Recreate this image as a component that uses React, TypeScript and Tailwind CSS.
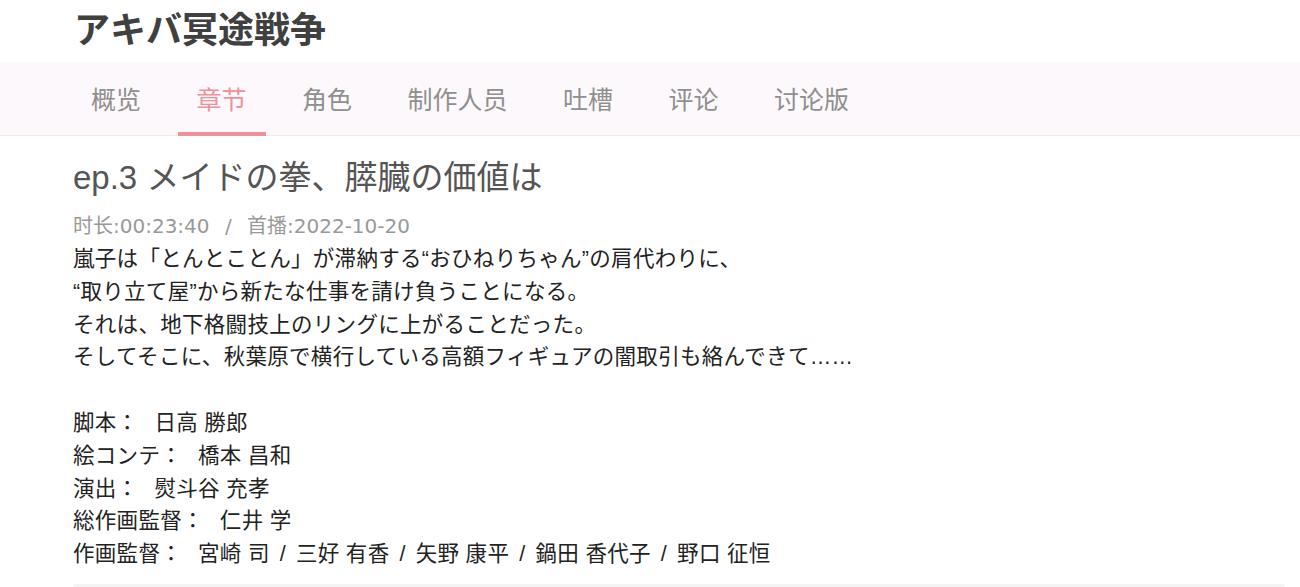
import React from "react";

const TABS = ["概览", "章节", "角色", "制作人员", "吐槽", "评论", "讨论版"];

const DESC = [
  "嵐子は「とんとことん」が滞納する“おひねりちゃん”の肩代わりに、",
  "“取り立て屋”から新たな仕事を請け負うことになる。",
  "それは、地下格闘技上のリングに上がることだった。",
  "そしてそこに、秋葉原で横行している高額フィギュアの闇取引も絡んできて……",
];

const STAFF = [
  { role: "脚本", names: ["日高 勝郎"] },
  { role: "絵コンテ", names: ["橋本 昌和"] },
  { role: "演出", names: ["熨斗谷 充孝"] },
  { role: "総作画監督", names: ["仁井 学"] },
  {
    role: "作画監督",
    names: ["宮崎 司", "三好 有香", "矢野 康平", "鍋田 香代子", "野口 征恒"],
  },
];

const jpFont = "font-['Liberation_Sans','Noto_Sans_CJK_JP',sans-serif]";

export default function App() {
  return (
    <div className="min-h-[587px] bg-white">
      {/* title */}
      <header className="flex h-[62px] items-center pl-[74px]">
        <h1
          className={`text-[36px] font-bold leading-none text-[#404040] ${jpFont}`}
        >
          アキバ冥途戦争
        </h1>
      </header>

      {/* tabs */}
      <nav className="flex h-[74px] gap-[17.5px] border-b border-[#ececec] bg-[#fdf8fb] pl-[72px]">
        {TABS.map((tab) => {
          const active = tab === "章节";
          return (
            <div
              key={tab}
              className={`-mb-px flex items-center border-b-4 px-[19px] pt-[3px] font-['Noto_Sans_CJK_SC',sans-serif] text-[25px] ${
                active
                  ? "border-[#f09199] text-[#f09199]"
                  : "border-transparent text-[#8f8f8f]"
              }`}
            >
              {tab}
            </div>
          );
        })}
      </nav>

      {/* episode */}
      <section className={`pl-[73px] pr-[15px] pt-[22px] ${jpFont}`}>
        <h2 className="text-[33px] leading-[40px] text-[#555]">
          ep.3 メイドの拳、膵臓の価値は
        </h2>
        <div className="mt-[12px] font-['DejaVu_Sans','Noto_Sans_CJK_SC',sans-serif] text-[20px] leading-[33px] text-[#999] [word-spacing:9px]">
          时长:00:23:40 / 首播:2022-10-20
        </div>
        <div className="text-[21.5px] leading-[32.8px] tracking-[0.3px] text-[#222]">
          {DESC.map((line) => (
            <p key={line}>{line}</p>
          ))}
          <p>&nbsp;</p>
          {STAFF.map((s) => (
            <p key={s.role}>
              {s.role}：
              <span className="ml-[16px]">
                {s.names.map((n, i) => (
                  <React.Fragment key={n}>
                    {i > 0 && <span className="mx-[10px]">/</span>}
                    {n}
                  </React.Fragment>
                ))}
              </span>
            </p>
          ))}
        </div>
        <div className="mt-[13px] h-[20px] rounded-t-[3px] bg-[#f4f4f4]" />
      </section>
    </div>
  );
}
